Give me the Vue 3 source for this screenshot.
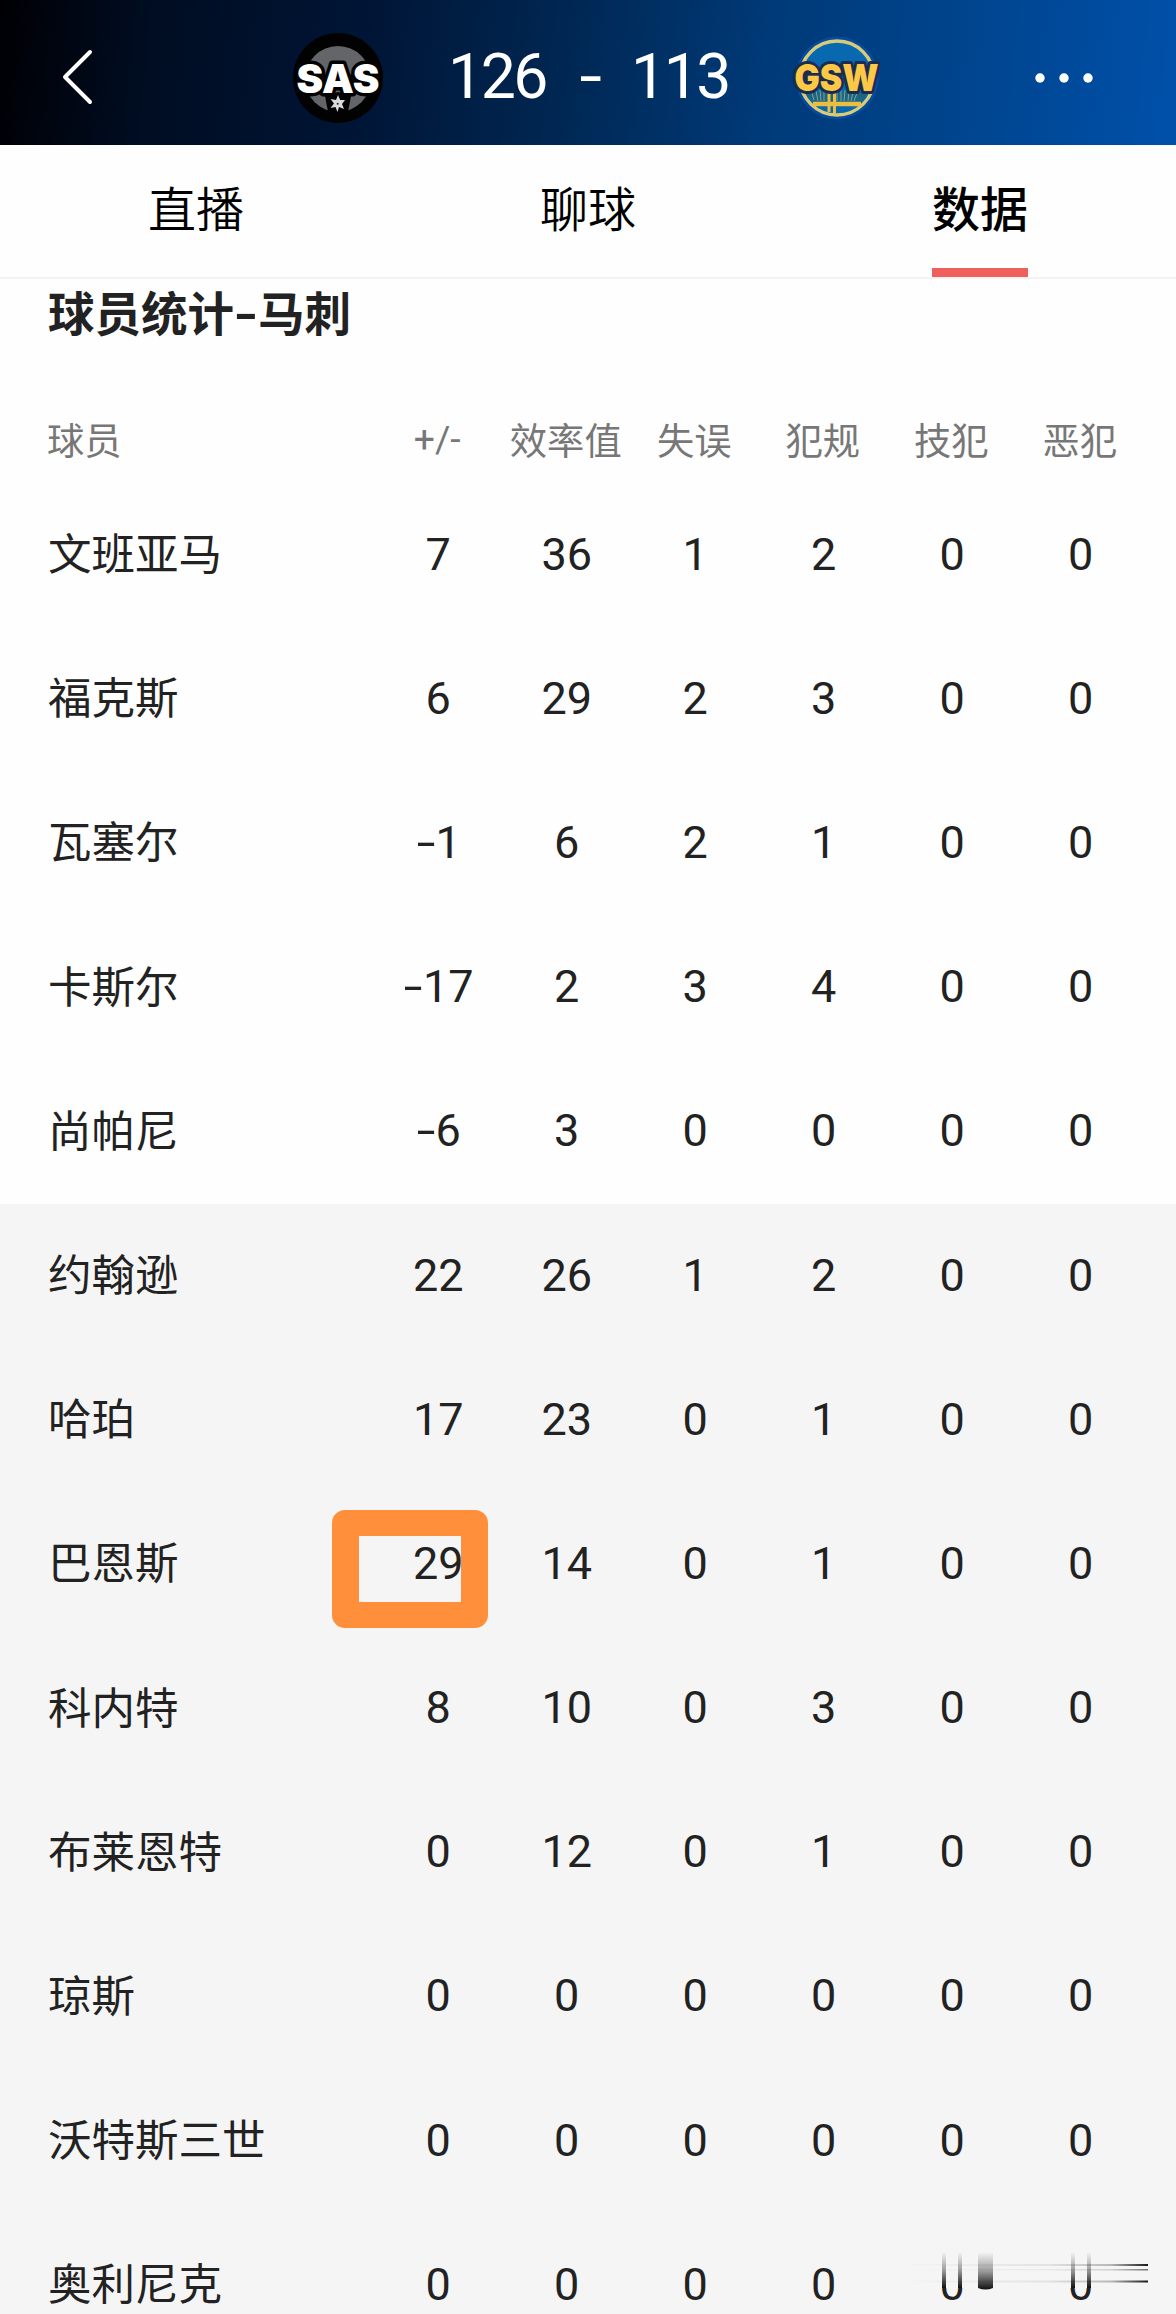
<template>
	<div class="page">
		<header class="header">
			<svg class="back" viewBox="0 0 40 64" width="40" height="64">
				<path d="M33 6 L8 31 L33 56" fill="none" stroke="#fff" stroke-width="4" stroke-linecap="round" stroke-linejoin="round" />
			</svg>
			<div class="game">
				<svg class="logo" viewBox="0 0 90 90" width="90" height="90">
					<circle cx="45" cy="45" r="45" fill="#020202" />
					<circle cx="45" cy="46" r="33" fill="#636569" />
					<path d="M30 41 Q29 57 42 64 M60 41 Q61 57 48 64" fill="none" stroke="#020202" stroke-width="5" />
					<path d="M32 63 L45 59 L58 63 L54 84 L36 84 Z" fill="#020202" />
					<text x="45" y="60" class="logo-text sas" textLength="83" lengthAdjust="spacingAndGlyphs">SAS</text>
					<path d="M45 62 L47.2 67 L52 67 L49 71 L51 76 L46 74 L44.5 79 L42.5 74 L37.5 75 L41 70.5 L37.5 66 L43 67 Z" fill="#d9dbdd" />
					<circle cx="44.7" cy="70.7" r="1" fill="#222" />
				</svg>
				<div class="score">
					<span>126</span>
					<span class="dash">-</span>
					<span>113</span>
				</div>
				<svg class="logo" viewBox="0 0 90 90" width="90" height="90">
					<circle cx="45" cy="45" r="41.5" fill="#064b9d" />
					<circle cx="45" cy="45" r="37" fill="#0869b0" stroke="#d9cc79" stroke-width="3.4" />
					<path d="M14 59 H76 L70 69 H20 Z" fill="#1b6681" />
					<path d="M20 60 L22 67 M24 58 L26 68 M28 57 L29 68 M32 56 V68 M45 56 V68 M49 56 V68 M53 57 L52 68 M57 58 L56 68 M61 59 L59 68 M65 60 L62 68" stroke="#7ba29a" stroke-width="1" />
					<path d="M21 71 H69" stroke="#edbd3f" stroke-width="4.5" />
					<path d="M37 56 V79 M42.5 56 V80" stroke="#edbd3f" stroke-width="3" />
					<text x="44.5" y="58" class="logo-text gsw" textLength="84" lengthAdjust="spacingAndGlyphs">GSW</text>
				</svg>
			</div>
			<svg class="more" viewBox="0 0 60 12" width="60" height="12">
				<circle cx="6" cy="6" r="4.7" />
				<circle cx="30" cy="6" r="4.7" />
				<circle cx="54" cy="6" r="4.7" />
			</svg>
		</header>

		<nav class="tabs">
			<div v-for="tab in tabs" :key="tab" class="tab" :class="{ active: tab === current }" @click="current = tab">
				<span>{{ tab }}</span>
			</div>
		</nav>

		<h1 class="title">球员统计<span class="hyphen">-</span>马刺</h1>

		<div class="row head">
			<div v-for="col in columns" :key="col">{{ col }}</div>
		</div>
		<div v-for="(p, i) in players" :key="p.name" class="row" :class="{ bench: i > 4 }">
			<div class="name">{{ p.name }}</div>
			<div v-for="(n, j) in p.stats" :key="j" class="num">
				<span v-if="n < 0" class="minus">-</span>{{ Math.abs(n) }}
				<i v-if="p.name === marked && j === 0" class="mark"></i>
			</div>
		</div>

		<svg class="smear" viewBox="0 0 276 74" width="276" height="74">
			<defs>
				<linearGradient id="down" x1="0" y1="0" x2="0" y2="1">
					<stop offset="0" stop-color="#111" stop-opacity="0" />
					<stop offset="0.5" stop-color="#111" stop-opacity="0.38" />
					<stop offset="1" stop-color="#111" />
				</linearGradient>
				<linearGradient id="across" x1="0" y1="0" x2="1" y2="0">
					<stop offset="0" stop-color="#000" stop-opacity="0" />
					<stop offset="0.6" stop-color="#000" stop-opacity="0.08" />
					<stop offset="0.85" stop-color="#000" stop-opacity="0.25" />
					<stop offset="1" stop-color="#000" stop-opacity="0.9" />
				</linearGradient>
			</defs>
			<rect width="276" height="48" fill="#f5f5f5" />
			<rect x="42" y="12" width="4" height="36" fill="url(#down)" />
			<rect x="58" y="12" width="4" height="36" fill="url(#down)" />
			<path d="M78 12 H93 V48 Q85.5 51 78 48 Z" fill="url(#down)" />
			<rect x="171" y="12" width="4" height="36" fill="url(#down)" />
			<rect x="187" y="12" width="4" height="36" fill="url(#down)" />
			<rect x="2" y="24" width="246" height="2" fill="url(#across)" />
			<rect x="2" y="29" width="246" height="1.5" fill="url(#across)" opacity="0.6" />
			<rect x="2" y="40.5" width="246" height="2" fill="url(#across)" />
		</svg>
	</div>
</template>

<script setup>
	import {
		ref
	} from 'vue'
	const tabs = ['直播', '聊球', '数据']
	const current = ref('数据')
	const marked = '巴恩斯'
	const columns = ['球员', '+/-', '效率值', '失误', '犯规', '技犯', '恶犯']
	const players = [
		{ name: '文班亚马', stats: [7, 36, 1, 2, 0, 0] },
		{ name: '福克斯', stats: [6, 29, 2, 3, 0, 0] },
		{ name: '瓦塞尔', stats: [-1, 6, 2, 1, 0, 0] },
		{ name: '卡斯尔', stats: [-17, 2, 3, 4, 0, 0] },
		{ name: '尚帕尼', stats: [-6, 3, 0, 0, 0, 0] },
		{ name: '约翰逊', stats: [22, 26, 1, 2, 0, 0] },
		{ name: '哈珀', stats: [17, 23, 0, 1, 0, 0] },
		{ name: '巴恩斯', stats: [29, 14, 0, 1, 0, 0] },
		{ name: '科内特', stats: [8, 10, 0, 3, 0, 0] },
		{ name: '布莱恩特', stats: [0, 12, 0, 1, 0, 0] },
		{ name: '琼斯', stats: [0, 0, 0, 0, 0, 0] },
		{ name: '沃特斯三世', stats: [0, 0, 0, 0, 0, 0] },
		{ name: '奥利尼克', stats: [0, 0, 0, 0, 0, 0] }
	]
</script>

<style>
	body {
		margin: 0;
		background: #fff;
	}
</style>

<style scoped>
	* {
		box-sizing: border-box;
	}

	.page {
		position: relative;
		width: 1176px;
		height: 2314px;
		overflow: hidden;
		background: #fefefe;
		color: #222;
		font-family: Roboto, "Noto Sans CJK SC", sans-serif;
	}

	.header {
		display: flex;
		align-items: center;
		height: 145px;
		padding: 11px 82px 0 57px;
		background: linear-gradient(96deg, #000004 0%, #000d22 13%, #001434 30%, #00254f 46%, #003a78 65%, #004691 84%, #0050aa 100%);
	}

	.game {
		display: flex;
		align-items: center;
		width: 589px;
		margin-left: 196px;
	}

	.logo {
		flex: none;
		overflow: visible;
	}

	.logo-text {
		font-family: Inter, "Liberation Sans", sans-serif;
		font-weight: 900;
		font-size: 40px;
		text-anchor: middle;
		paint-order: stroke;
		stroke-linejoin: round;
	}

	.sas {
		fill: #fff;
		stroke: #020202;
		stroke-width: 7px;
	}

	.gsw {
		font-size: 37px;
		fill: #fdc845;
		stroke: #1b2c50;
		stroke-width: 6px;
	}

	.score {
		flex: 1;
		display: grid;
		grid-template-columns: 105px 78px 105px;
		justify-content: center;
		padding: 0 0 2px 2px;
		text-align: center;
		color: #fff;
		font-size: 62.5px;
		font-weight: 400;
		line-height: 84px;
		letter-spacing: -2.5px;
	}

	.dash {
		transform: scaleX(1.3);
	}

	.more {
		margin-left: auto;
		fill: #fff;
	}

	.tabs {
		display: grid;
		grid-template-columns: repeat(3, 1fr);
		height: 134px;
		border-bottom: 2px solid #f3f3f3;
		color: #000;
		font-size: 48px;
		font-weight: 350;
		line-height: 131px;
		text-align: center;
	}

	.tab span {
		display: inline-block;
		height: 132px;
	}

	.active span {
		border-bottom: 9px solid #ef5f5b;
		font-weight: 500;
	}

	.title {
		height: 120px;
		margin: 0;
		padding-left: 48px;
		font-size: 46.5px;
		font-weight: bold;
		line-height: 72px;
	}

	.hyphen {
		display: inline-block;
		width: 24px;
		text-align: center;
		transform: scaleX(1.4);
	}

	.row {
		display: grid;
		grid-template-columns: 326px repeat(6, 128.5px);
		align-items: center;
		height: 144.2px;
		padding: 0 0 2px 48px;
		font-size: 43.5px;
		text-align: center;
	}

	.row > :first-child {
		text-align: left;
	}

	.name {
		padding-bottom: 5px;
	}

	.head {
		height: 84px;
		padding: 0 0 5px 47px;
		color: #777;
		font-size: 37.3px;
		white-space: nowrap;
	}

	.bench {
		background: #f5f5f5;
	}

	.num {
		position: relative;
		font-size: 45px;
	}

	.minus {
		display: inline-block;
		width: 20px;
		transform: scaleX(1.5);
	}

	.mark {
		position: absolute;
		left: -42px;
		top: -27px;
		width: 156px;
		height: 118px;
		border: 26px solid #ff8f3b;
		border-left-width: 27px;
		border-right-width: 27px;
		border-radius: 13px;
	}

	.smear {
		position: absolute;
		right: 0;
		bottom: 0;
	}
</style>
